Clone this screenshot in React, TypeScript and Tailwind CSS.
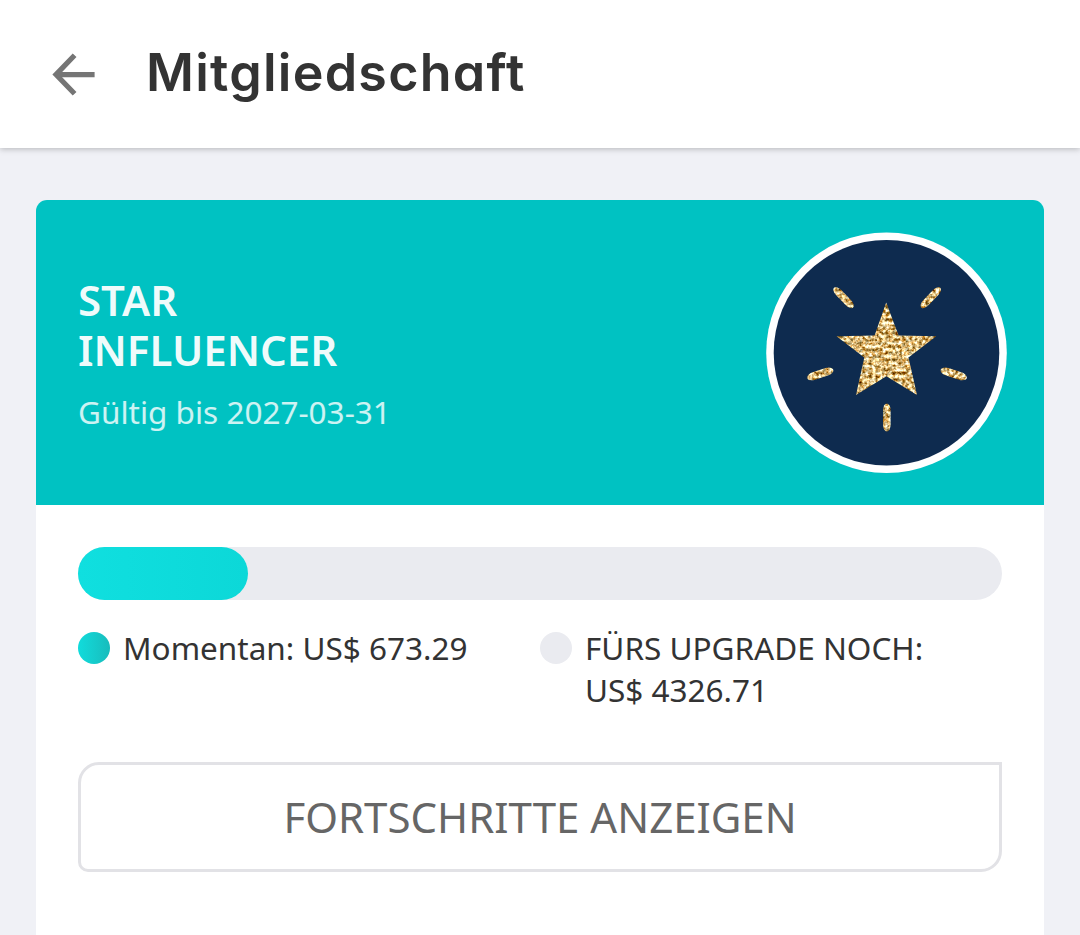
import { clsx } from "clsx";

const membership = {
  level: ["STAR", "INFLUENCER"],
  validUntil: "2027-03-31",
  current: "673.29",
  remaining: "4326.71",
  percent: 18.4,
};

function BackArrow() {
  return (
    <svg className="block h-[43px] w-[43px]" viewBox="0 0 43 43" fill="none" stroke="#757575" strokeWidth="5.2">
      <path d="M22.6 2.2 L4 21.6 L22.6 40.8" />
      <path d="M4.4 21.6 H42.6" />
    </svg>
  );
}

function StarBadge() {
  return (
    <svg className="block h-[241px] w-[241px]" viewBox="0 0 241 241">
      <defs>
        {/* gold glitter, clipped to whatever shape it is applied to */}
        <filter id="glitter" x="0" y="0" width="241" height="241" filterUnits="userSpaceOnUse" colorInterpolationFilters="sRGB">
          <feTurbulence type="fractalNoise" baseFrequency="0.3" numOctaves="3" seed="11" />
          <feColorMatrix
            type="matrix"
            values="1.4 0 0 0 0.16  1.5 0.4 0 0 -0.23  1.7 0.8 0 0 -0.78  0 0 0 0 1"
          />
          <feComposite in2="SourceAlpha" operator="in" />
        </filter>
      </defs>
      <circle cx="120.5" cy="120.7" r="120.3" fill="#ffffff" />
      <circle cx="120.5" cy="120.7" r="112.8" fill="#0e2b4f" />
      <g filter="url(#glitter)">
        <path d="M120.2 70.5 L132.6 103.6 L170.2 104.2 L142.5 125.5 L151 163 L120.4 144.3 L90 163 L98.3 125.5 L70.5 104.2 L108.6 103.6 Z" />
        <rect x="63.8" y="61.9" width="27.5" height="7.4" rx="7" ry="3.7" transform="rotate(46 77.5 65.6)" />
        <rect x="151" y="61.9" width="27.5" height="7.4" rx="7" ry="3.7" transform="rotate(-46 164.8 65.6)" />
        <rect x="40.5" y="138" width="27.5" height="7.8" rx="7" ry="3.9" transform="rotate(-18 54.3 141.9)" />
        <rect x="174" y="138" width="27.5" height="7.8" rx="7" ry="3.9" transform="rotate(18 187.8 141.9)" />
        <rect x="117" y="171.5" width="7.6" height="28" rx="3.8" ry="7" />
      </g>
    </svg>
  );
}

function LegendItem({ dot, lines }: { dot: string; lines: string[] }) {
  return (
    <div className="flex w-1/2 items-start">
      <span className={clsx("mt-[5px] mr-[13px] h-8 w-8 shrink-0 rounded-full", dot)} />
      <p className="text-[31.5px] leading-[42px] whitespace-nowrap text-[#333333]">
        {lines.map((line) => (
          <span key={line} className="block">{line}</span>
        ))}
      </p>
    </div>
  );
}

export default function App() {
  return (
    <div className="flex h-[935px] w-[1080px] flex-col overflow-hidden bg-[#f0f1f6] font-['Noto_Sans',sans-serif]">
      <header className="z-10 flex h-[148px] shrink-0 items-center bg-white pl-[52px] shadow-[0_1px_6px_rgba(0,0,0,0.25)]">
        <BackArrow />
        <h1 className="ml-[51px] pb-0.5 font-['Inter',sans-serif] text-[52px] leading-[60px] font-semibold tracking-[1.25px] text-[#333333] [font-feature-settings:'cv11']">
          Mitgliedschaft
        </h1>
      </header>

      <main className="mx-9 mt-[52px] flex grow flex-col overflow-hidden rounded-t-[11px] bg-white">
        {/* Level banner */}
        <section className="flex h-[305px] shrink-0 items-center justify-between bg-[#00c2c2] pr-[37px] pl-[42px]">
          <div className="pt-0.5 text-white">
            <h2 className="text-[42px] leading-[50px] font-semibold text-white/95">
              {membership.level.map((word) => (
                <span key={word} className="block">{word}</span>
              ))}
            </h2>
            <p className="mt-4 text-[31.5px] leading-[42px] text-white/80">Gültig bis {membership.validUntil}</p>
          </div>
          <StarBadge />
        </section>

        <section className="px-[42px] pt-[42px]">
          <div className="h-[52.5px] rounded-full bg-[#eaebf0]">
            <div
              className="h-full rounded-full bg-linear-to-r from-[#10dfdf] to-[#0cd8d8]"
              style={{ width: `${membership.percent}%` }}
            />
          </div>

          <div className="mt-[27.5px] flex">
            <LegendItem dot="bg-linear-to-r from-[#10dcdc] to-[#18bcbc]" lines={[`Momentan: US$ ${membership.current}`]} />
            <LegendItem dot="bg-[#eaebf0]" lines={["FÜRS UPGRADE NOCH:", `US$ ${membership.remaining}`]} />
          </div>

          <button className="mt-[51px] flex h-[110px] w-full items-center justify-center rounded-tl-[21px] rounded-br-[21px] rounded-bl-[10px] border-[3px] border-[#e2e2e6] pb-0.5 text-[42px] text-[#666666]">
            FORTSCHRITTE ANZEIGEN
          </button>
        </section>
      </main>
    </div>
  );
}
